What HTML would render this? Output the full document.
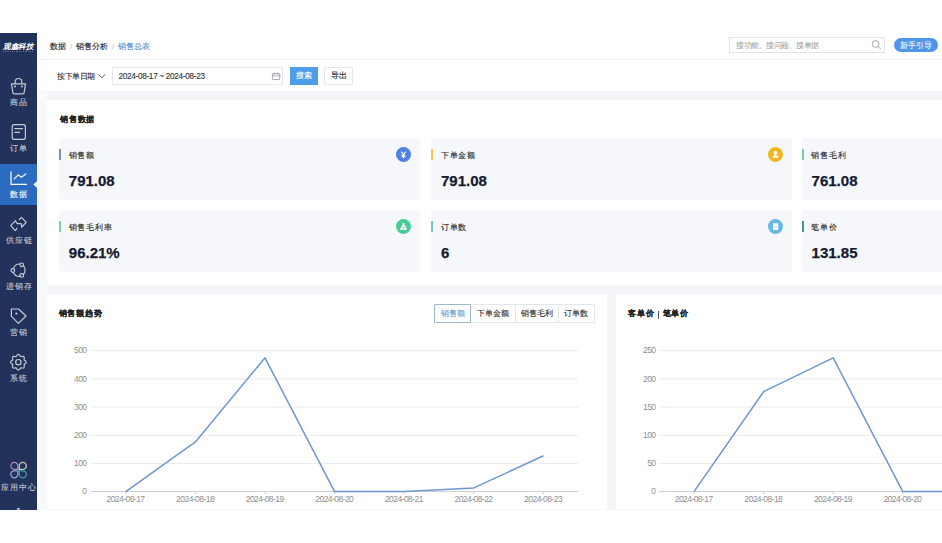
<!DOCTYPE html>
<html><head><meta charset="utf-8">
<style>
*{margin:0;padding:0;box-sizing:border-box}
html,body{width:942px;height:543px;overflow:hidden;background:#fff}
body{position:relative;font-family:"Liberation Sans",sans-serif;color:#333}
.a{position:absolute}
.t{position:absolute;white-space:nowrap;line-height:1;-webkit-text-stroke-width:0.12px}
#side{left:0;top:33px;width:37px;height:476.5px;background:#22325a}
#main{left:37px;top:33px;width:905px;height:476.5px;background:#f3f5f9}
#lstrip{left:37px;top:60px;width:9.5px;height:449.5px;background:#f8f9fc}
#hdr{left:37px;top:33px;width:905px;height:27px;background:#fff;border-bottom:1px solid #eff1f5}
#flt{left:37px;top:60px;width:905px;height:30.5px;background:#fff}
.nav{color:#c5cad6;font-size:8px;letter-spacing:1px;padding-left:1px;width:37px;text-align:center;left:0;-webkit-text-stroke-width:0.1px}
.card{background:#fff}
.mc{position:absolute;background:#f5f7fa;border-radius:4px;width:360.8px;height:62.2px}
.mc .bar{position:absolute;left:0;top:11px;width:2px;height:11px}
.mc .lb{position:absolute;-webkit-text-stroke-width:0.12px;left:9.5px;top:12.5px;font-size:8px;letter-spacing:0.85px;color:#2a2a2a;line-height:10px;white-space:nowrap}
.mc .num{position:absolute;left:9.8px;top:34.9px;font-size:15px;font-weight:bold;color:#161b30;-webkit-text-stroke:0.25px #161b30;line-height:15px;white-space:nowrap}
.mc .ic{position:absolute;right:8.6px;top:9.2px;width:15px;height:15px;border-radius:50%}
.yl{font-size:7.5px;color:#999;text-align:right;width:30px;line-height:8px}
.xl{font-size:7.5px;color:#999;text-align:center;width:50px;line-height:8px}
</style></head><body>
<div class="a" id="main"></div>
<div class="a" id="lstrip"></div>
<div class="a" id="hdr"></div>
<div class="a" id="flt"></div>

<!-- sidebar -->
<div class="a" id="side"></div>
<div class="a" style="left:0;top:164.4px;width:37px;height:40.3px;background:#2b6cc0"></div>
<div class="t" style="left:0;top:43px;width:37px;text-align:center;font-size:7.6px;font-weight:bold;font-style:italic;color:#fff;letter-spacing:-0.3px;-webkit-text-stroke-width:0">观鑫科技</div>
<div class="a" style="left:2.5px;top:51.3px;width:31px;height:1px;background:repeating-linear-gradient(90deg,#8d96ad 0 1px,transparent 1px 1.8px);opacity:0.55"></div>
<div class="t nav" style="top:99px">商品</div>
<div class="t nav" style="top:145px">订单</div>
<div class="t nav" style="top:191px;color:#fff">数据</div>
<div class="t nav" style="top:237px">供应链</div>
<div class="t nav" style="top:283px">进销存</div>
<div class="t nav" style="top:329px">营销</div>
<div class="t nav" style="top:374.5px">系统</div>
<div class="t nav" style="top:483.5px">应用中心</div>

<svg class="a" style="left:0;top:0" width="942" height="543" viewBox="0 0 942 543">
<g fill="none" stroke="#c3c9d6" stroke-width="1.2" stroke-linecap="round" stroke-linejoin="round">
 <!-- bag -->
 <path d="M15.2 83.6 V81.8 A3.3 3.3 0 0 1 21.8 81.8 V83.6"/>
 <path d="M11.5 83.8 H25.5 L24.2 92.3 Q24 93.8 22.5 93.8 H14.5 Q13 93.8 12.8 92.3 Z"/>
 <!-- doc -->
 <rect x="12.2" y="124.6" width="13.2" height="14.8" rx="2.2"/>
 <path d="M14.8 128.6 H22.6 M14.8 132.3 H19.6"/>
 <!-- supply chain -->
 <path d="M19.3 219.5 L21.6 217.4 L26.2 222.3 L21.8 227"/>
 <path d="M16.9 228.5 L15.2 230.6 L10.7 225.6 L15.4 220.8"/>
 <path d="M15.4 220.8 L17.3 223.6 H21.2 L21.8 227"/>
 <!-- jxc -->
 <path d="M23.4 265.6 A6.6 6.6 0 0 1 23.4 274.4"/>
 <path d="M19.8 276.4 A6.6 6.6 0 0 1 13.4 272.4"/>
 <path d="M13.4 268.6 A6.6 6.6 0 0 1 19.8 264"/>
 <circle cx="21.7" cy="264.8" r="1.8"/>
 <circle cx="12.9" cy="270.5" r="1.8"/>
 <circle cx="21.7" cy="275.4" r="1.8"/>
 <!-- tag -->
 <path d="M11.4 309 H18.6 L26 316 L18.4 323.4 L11.4 316.4 Z"/>
 <!-- gear -->
 <path d="M26.20 362.20 L26.08 362.70 L25.74 363.17 L25.27 363.57 L24.78 363.91 L24.37 364.23 L24.13 364.57 L24.06 364.99 L24.12 365.50 L24.22 366.09 L24.27 366.70 L24.18 367.27 L23.92 367.72 L23.47 367.98 L22.90 368.07 L22.29 368.02 L21.70 367.92 L21.19 367.86 L20.77 367.93 L20.43 368.17 L20.11 368.58 L19.77 369.07 L19.37 369.54 L18.90 369.88 L18.40 370.00 L17.90 369.88 L17.43 369.54 L17.03 369.07 L16.69 368.58 L16.37 368.17 L16.03 367.93 L15.61 367.86 L15.10 367.92 L14.51 368.02 L13.90 368.07 L13.33 367.98 L12.88 367.72 L12.62 367.27 L12.53 366.70 L12.58 366.09 L12.68 365.50 L12.74 364.99 L12.67 364.57 L12.43 364.23 L12.02 363.91 L11.53 363.57 L11.06 363.17 L10.72 362.70 L10.60 362.20 L10.72 361.70 L11.06 361.23 L11.53 360.83 L12.02 360.49 L12.43 360.17 L12.67 359.83 L12.74 359.41 L12.68 358.90 L12.58 358.31 L12.53 357.70 L12.62 357.13 L12.88 356.68 L13.33 356.42 L13.90 356.33 L14.51 356.38 L15.10 356.48 L15.61 356.54 L16.03 356.47 L16.37 356.23 L16.69 355.82 L17.03 355.33 L17.43 354.86 L17.90 354.52 L18.40 354.40 L18.90 354.52 L19.37 354.86 L19.77 355.33 L20.11 355.82 L20.43 356.23 L20.77 356.47 L21.19 356.54 L21.70 356.48 L22.29 356.38 L22.90 356.33 L23.47 356.42 L23.92 356.68 L24.18 357.13 L24.27 357.70 L24.22 358.31 L24.12 358.90 L24.06 359.41 L24.13 359.83 L24.37 360.17 L24.78 360.49 L25.27 360.83 L25.74 361.23 L26.08 361.70 Z"/>
 <circle cx="18.4" cy="362.2" r="2.7"/>
 <!-- chart -->
 <path d="M11 171.8 V184.4 H26.4" stroke="#ffffff"/>
 <path d="M14.2 178.8 L18.2 174.8 L21.4 177.2 L25.8 174" stroke="#ffffff"/>
</g>
<circle cx="16.4" cy="313.6" r="1.1" fill="#c3c9d6"/>
<circle cx="15" cy="86.6" r="1" fill="#c3c9d6"/>
<circle cx="22" cy="86.6" r="1" fill="#c3c9d6"/>
<!-- app center petals -->
<g fill="none" stroke-width="1.3">
 <path d="M17.9 469.4 H14.4 A3.5 3.5 0 1 1 17.9 465.9 Z" stroke="#a98ab3"/>
 <path d="M19.3 469.4 H22.8 A3.5 3.5 0 1 0 19.3 465.9 Z" stroke="#cbc9bd"/>
 <path d="M17.9 470.8 H14.4 A3.5 3.5 0 1 0 17.9 474.3 Z" stroke="#8cace0"/>
 <path d="M19.3 470.8 H22.8 A3.5 3.5 0 1 1 19.3 474.3 Z" stroke="#4a9fa0"/>
</g>
<!-- active arrow -->
<path d="M33.3 184.5 L37 181.3 L37 187.7 Z" fill="#f6f8fb"/>
<path d="M16.2 509.6 L18.4 507.8 L20.6 509.6 Z" fill="#ffffff"/>
</svg>


<!-- header content -->
<div class="t" style="left:50px;top:43px;font-size:7.5px;color:#222">数据<span style="color:#c0c4cc;margin:0 4px">/</span>销售分析<span style="color:#c0c4cc;margin:0 4px">/</span><span style="color:#5b8fc9">销售总表</span></div>
<div class="a" style="left:729px;top:37px;width:156px;height:16px;border:1px solid #e2e4ea;background:#fff"></div>
<div class="t" style="left:736px;top:41.5px;font-size:8px;letter-spacing:-0.5px;color:#9a9a9a;-webkit-text-stroke-width:0">搜功能、搜问题、搜单据</div>
<div class="a" style="left:894px;top:37.5px;width:44px;height:14.5px;border-radius:8px;background:#4f97e6"></div>
<div class="t" style="left:894px;top:42px;width:44px;text-align:center;font-size:7.5px;color:#fff;-webkit-text-stroke-width:0.05px">新手引导</div>

<!-- filter -->
<div class="t" style="left:57px;top:72.5px;font-size:8px;letter-spacing:-0.5px;color:#333">按下单日期</div>
<div class="a" style="left:112px;top:67px;width:171px;height:18px;border:1px solid #e6e8ed;background:#fff"></div>
<div class="t" style="left:118.5px;top:72.6px;font-size:8.2px;letter-spacing:-0.3px;color:#333">2024-08-17 ~ 2024-08-23</div>
<div class="a" style="left:290px;top:67px;width:28px;height:18px;background:#4d9de8"></div>
<div class="t" style="left:290px;top:72px;width:28px;text-align:center;font-size:7.5px;color:#fff">搜索</div>
<div class="a" style="left:324px;top:67px;width:28.5px;height:18px;background:#fff;border:1px solid #e6e8ed"></div>
<div class="t" style="left:325px;top:72px;width:28.5px;text-align:center;font-size:8px;color:#222">导出</div>

<svg class="a" style="left:0;top:0" width="942" height="543" viewBox="0 0 942 543">
<path d="M98.4 74.2 L101.8 78 L105.2 74.2" fill="none" stroke="#555a60" stroke-width="0.95"/>
<g fill="none" stroke="#8a8f99" stroke-width="0.8">
<rect x="272.4" y="73.6" width="7.4" height="6" rx="0.8"/>
<path d="M272.4 75.8 H279.8 M274.4 72.6 V74.4 M277.8 72.6 V74.4"/>
</g>
<circle cx="875.6" cy="44" r="3.4" fill="none" stroke="#9aa0a8" stroke-width="0.9"/>
<path d="M878.1 46.5 L880.6 49" stroke="#9aa0a8" stroke-width="0.9" stroke-linecap="round"/>
</svg>
<!-- sales data card -->
<div class="a card" style="left:46.5px;top:99.6px;width:900px;height:185.8px"></div>
<div class="t" style="left:60px;top:116px;font-size:8px;letter-spacing:0.75px;font-weight:bold;color:#222;-webkit-text-stroke-width:0.12px">销售数据</div>

<div class="mc" style="left:59px;top:138.3px"><div class="bar" style="background:#7a90b8"></div><div class="lb">销售额</div><div class="num">791.08</div><div class="ic" style="background:#4f7fe0"><svg width="15" height="15" viewBox="0 0 15 15" style="position:absolute;left:0;top:0"><path d="M5.2 4.6 L7.5 7.6 L9.8 4.6 M7.5 7.6 V11 M5.6 8.4 H9.4 M5.6 9.8 H9.4" fill="none" stroke="#fff" stroke-width="1.1"/></svg></div></div>
<div class="mc" style="left:431.2px;top:138.3px"><div class="bar" style="background:#f0c850"></div><div class="lb">下单金额</div><div class="num">791.08</div><div class="ic" style="background:#f0b820"><svg width="15" height="15" viewBox="0 0 15 15" style="position:absolute;left:0;top:0"><circle cx="7.5" cy="5.8" r="1.9" fill="#fff"/><path d="M4.6 10.8 Q4.6 8 7.5 8 Q10.4 8 10.4 10.8 Z" fill="#fff"/></svg></div></div>
<div class="mc" style="left:801.8px;top:138.3px"><div class="bar" style="background:#7ccfae"></div><div class="lb">销售毛利</div><div class="num">761.08</div></div>
<div class="mc" style="left:59px;top:210.3px"><div class="bar" style="background:#80cfb0"></div><div class="lb">销售毛利率</div><div class="num">96.21%</div><div class="ic" style="background:#48cc98"><svg width="15" height="15" viewBox="0 0 15 15" style="position:absolute;left:0;top:0"><path d="M6.3 4.2 H8.7 L8.4 5.8 L11 10 Q11.3 10.8 10.5 10.8 H4.5 Q3.7 10.8 4 10 L6.6 5.8 Z" fill="#fff"/><circle cx="7.5" cy="8.6" r="0.9" fill="#48cc98"/></svg></div></div>
<div class="mc" style="left:431.2px;top:210.3px"><div class="bar" style="background:#7ec0d8"></div><div class="lb">订单数</div><div class="num">6</div><div class="ic" style="background:#6ab8e0"><svg width="15" height="15" viewBox="0 0 15 15" style="position:absolute;left:0;top:0"><rect x="5" y="4.3" width="5.2" height="6.6" fill="#fff"/><path d="M6.4 7 H8.8 M6.4 8.6 H8.8" stroke="#8cc8e4" stroke-width="0.6"/></svg></div></div>
<div class="mc" style="left:801.8px;top:210.3px"><div class="bar" style="background:#3a9a90"></div><div class="lb">笔单价</div><div class="num">131.85</div></div>

<!-- chart cards -->
<div class="a card" style="left:46.5px;top:294.4px;width:560px;height:215.1px"></div>
<div class="a card" style="left:615.5px;top:294.4px;width:330px;height:215.1px"></div>
<div class="t" style="left:58.5px;top:309.5px;font-size:8px;letter-spacing:0.75px;font-weight:bold;color:#222;-webkit-text-stroke-width:0.12px">销售额趋势</div>
<div class="t" style="left:628px;top:309.5px;font-size:8px;letter-spacing:0.75px;font-weight:bold;color:#222;-webkit-text-stroke-width:0.12px">客单价</div>
<div class="a" style="left:658px;top:310.5px;width:1px;height:8px;background:#555"></div>
<div class="t" style="left:662.5px;top:309.5px;font-size:8px;letter-spacing:0.75px;font-weight:bold;color:#222;-webkit-text-stroke-width:0.12px">笔单价</div>

<div class="a" style="left:434px;top:304px;width:160.5px;height:18.5px;border:1px solid #e3e6eb;border-radius:1px"></div>
<div class="a" style="left:470px;top:304.3px;width:1px;height:18.2px;background:#e3e6eb"></div>
<div class="a" style="left:514.5px;top:304.3px;width:1px;height:18.2px;background:#e3e6eb"></div>
<div class="a" style="left:557.8px;top:304.3px;width:1px;height:18.2px;background:#e3e6eb"></div>
<div class="a" style="left:434px;top:304px;width:36.8px;height:18.5px;border:1px solid #9bb9c6;border-radius:1px"></div>
<div class="t" style="left:434.5px;top:309.5px;width:36px;text-align:center;font-size:7.5px;color:#6a9dd0;-webkit-text-stroke-width:0.1px">销售额</div>
<div class="t" style="left:470.5px;top:309.5px;width:44px;text-align:center;font-size:7.5px;color:#333">下单金额</div>
<div class="t" style="left:515px;top:309.5px;width:43px;text-align:center;font-size:7.5px;color:#333">销售毛利</div>
<div class="t" style="left:558.3px;top:309.5px;width:36px;text-align:center;font-size:7.5px;color:#333">订单数</div>
<svg class="a" style="left:0;top:0;font-family:'Liberation Sans',sans-serif;font-size:8.5px;letter-spacing:-0.55px;fill:#8f8f8f" width="942" height="543" viewBox="0 0 942 543">
<line x1="91" y1="350.5" x2="578" y2="350.5" stroke="#eaecef" stroke-width="1"/>
<line x1="91" y1="378.8" x2="578" y2="378.8" stroke="#eaecef" stroke-width="1"/>
<line x1="91" y1="407.1" x2="578" y2="407.1" stroke="#eaecef" stroke-width="1"/>
<line x1="91" y1="435.4" x2="578" y2="435.4" stroke="#eaecef" stroke-width="1"/>
<line x1="91" y1="463.5" x2="578" y2="463.5" stroke="#eaecef" stroke-width="1"/>
<line x1="91" y1="491.6" x2="578" y2="491.6" stroke="#c9cdd4" stroke-width="1"/>
<text x="86.5" y="353.2" text-anchor="end">500</text>
<text x="86.5" y="381.5" text-anchor="end">400</text>
<text x="86.5" y="409.8" text-anchor="end">300</text>
<text x="86.5" y="438.1" text-anchor="end">200</text>
<text x="86.5" y="466.2" text-anchor="end">100</text>
<text x="86.5" y="494.3" text-anchor="end">0</text>
<line x1="125.8" y1="491.6" x2="125.8" y2="494" stroke="#c9cdd4" stroke-width="1"/>
<text x="125.8" y="502" text-anchor="middle" dx="-0.3">2024-08-17</text>
<line x1="195.4" y1="491.6" x2="195.4" y2="494" stroke="#c9cdd4" stroke-width="1"/>
<text x="195.4" y="502" text-anchor="middle" dx="-0.3">2024-08-18</text>
<line x1="265.0" y1="491.6" x2="265.0" y2="494" stroke="#c9cdd4" stroke-width="1"/>
<text x="265.0" y="502" text-anchor="middle" dx="-0.3">2024-08-19</text>
<line x1="334.6" y1="491.6" x2="334.6" y2="494" stroke="#c9cdd4" stroke-width="1"/>
<text x="334.6" y="502" text-anchor="middle" dx="-0.3">2024-08-20</text>
<line x1="404.2" y1="491.6" x2="404.2" y2="494" stroke="#c9cdd4" stroke-width="1"/>
<text x="404.2" y="502" text-anchor="middle" dx="-0.3">2024-08-21</text>
<line x1="473.8" y1="491.6" x2="473.8" y2="494" stroke="#c9cdd4" stroke-width="1"/>
<text x="473.8" y="502" text-anchor="middle" dx="-0.3">2024-08-22</text>
<line x1="543.4" y1="491.6" x2="543.4" y2="494" stroke="#c9cdd4" stroke-width="1"/>
<text x="543.4" y="502" text-anchor="middle" dx="-0.3">2024-08-23</text>
<polyline points="125.8,491.6 195.4,441.9 265.0,357.8 334.6,491.6 404.2,491.6 473.8,487.9 543.4,455.8" fill="none" stroke="#6f97cf" stroke-width="1.5" stroke-linejoin="round"/>
<line x1="659.2" y1="350.5" x2="1150" y2="350.5" stroke="#eaecef" stroke-width="1"/>
<line x1="659.2" y1="378.8" x2="1150" y2="378.8" stroke="#eaecef" stroke-width="1"/>
<line x1="659.2" y1="407.1" x2="1150" y2="407.1" stroke="#eaecef" stroke-width="1"/>
<line x1="659.2" y1="435.4" x2="1150" y2="435.4" stroke="#eaecef" stroke-width="1"/>
<line x1="659.2" y1="463.5" x2="1150" y2="463.5" stroke="#eaecef" stroke-width="1"/>
<line x1="659.2" y1="491.6" x2="1150" y2="491.6" stroke="#c9cdd4" stroke-width="1"/>
<text x="655.5" y="353.2" text-anchor="end">250</text>
<text x="655.5" y="381.5" text-anchor="end">200</text>
<text x="655.5" y="409.8" text-anchor="end">150</text>
<text x="655.5" y="438.1" text-anchor="end">100</text>
<text x="655.5" y="466.2" text-anchor="end">50</text>
<text x="655.5" y="494.3" text-anchor="end">0</text>
<line x1="694.0" y1="491.6" x2="694.0" y2="494" stroke="#c9cdd4" stroke-width="1"/>
<text x="694.0" y="502" text-anchor="middle" dx="-0.3">2024-08-17</text>
<line x1="763.6" y1="491.6" x2="763.6" y2="494" stroke="#c9cdd4" stroke-width="1"/>
<text x="763.6" y="502" text-anchor="middle" dx="-0.3">2024-08-18</text>
<line x1="833.2" y1="491.6" x2="833.2" y2="494" stroke="#c9cdd4" stroke-width="1"/>
<text x="833.2" y="502" text-anchor="middle" dx="-0.3">2024-08-19</text>
<line x1="902.8" y1="491.6" x2="902.8" y2="494" stroke="#c9cdd4" stroke-width="1"/>
<text x="902.8" y="502" text-anchor="middle" dx="-0.3">2024-08-20</text>
<polyline points="694.0,491.6 763.6,391.7 833.2,357.8 902.8,491.6 972.4,491.6" fill="none" stroke="#6f97cf" stroke-width="1.5" stroke-linejoin="round"/>
</svg>
</body></html>
